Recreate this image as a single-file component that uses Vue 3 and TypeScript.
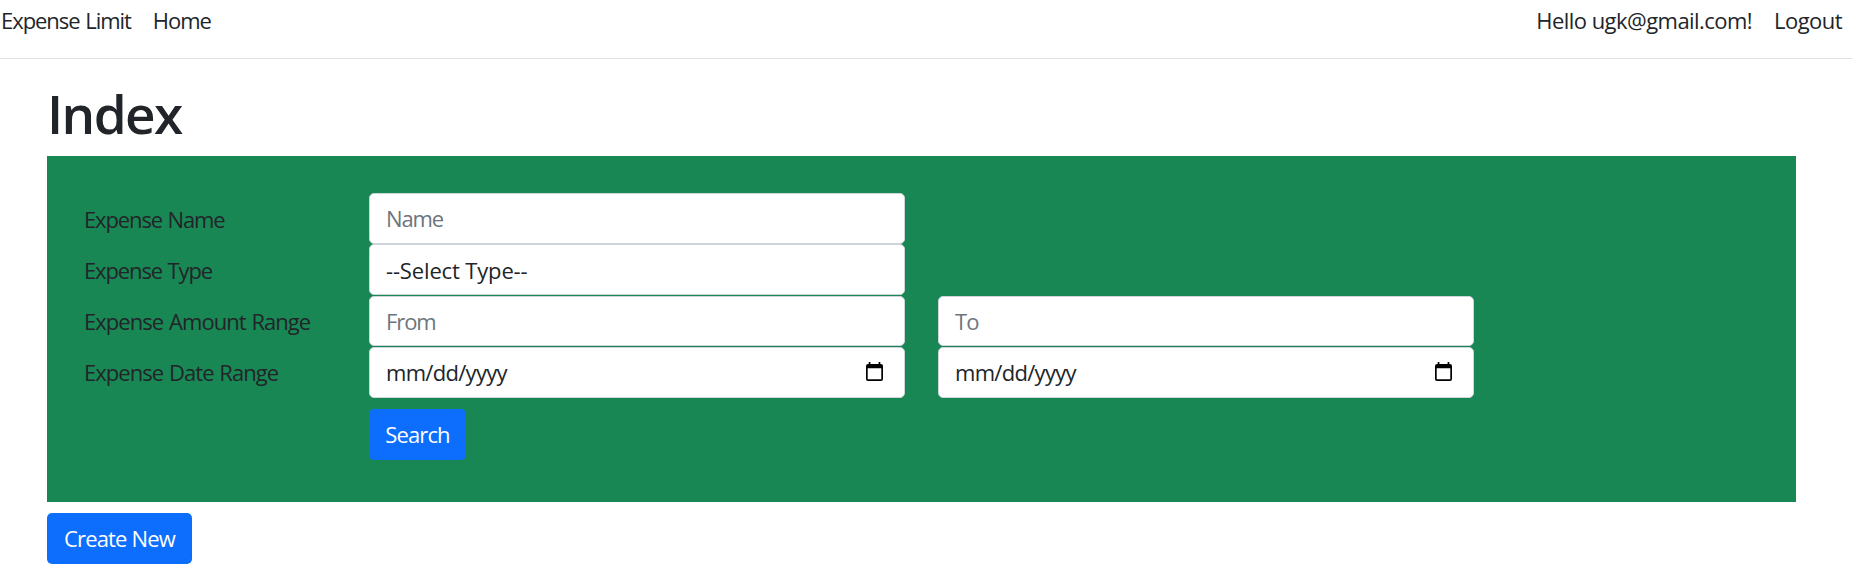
<script setup lang="ts">
import { ref } from 'vue'

interface Field {
  key: string
  placeholder: string
  kind: 'text' | 'select' | 'date'
}

interface Row {
  key: string
  label: string
  fields: Field[]
}

const rows: Row[] = [
  { key: 'name', label: 'Expense Name', fields: [{ key: 'f-name', placeholder: 'Name', kind: 'text' }] },
  { key: 'type', label: 'Expense Type', fields: [{ key: 'f-type', placeholder: '--Select Type--', kind: 'select' }] },
  {
    key: 'amount',
    label: 'Expense Amount Range',
    fields: [
      { key: 'f-from', placeholder: 'From', kind: 'text' },
      { key: 'f-to', placeholder: 'To', kind: 'text' },
    ],
  },
  {
    key: 'date',
    label: 'Expense Date Range',
    fields: [
      { key: 'f-start', placeholder: 'mm/dd/yyyy', kind: 'date' },
      { key: 'f-end', placeholder: 'mm/dd/yyyy', kind: 'date' },
    ],
  },
]

const values = ref<Record<string, string>>({})
</script>

<template>
  <div class="page">
    <header class="navbar">
      <nav class="links">
        <a class="brand">Expense Limit</a>
        <a class="home">Home</a>
      </nav>
      <nav class="links account">
        <a class="hello">Hello ugk@gmail.com!</a>
        <a class="logout">Logout</a>
      </nav>
    </header>

    <main class="content">
      <h1>Index</h1>
      <form class="panel" @submit.prevent>
        <div v-for="row in rows" :key="row.key" class="row" :class="'row-' + row.key">
          <label><span>{{ row.label }}</span></label>
          <div v-for="f in row.fields" :key="f.key" class="cell" :class="f.key">
            <select v-if="f.kind === 'select'" class="control select">
              <option>{{ f.placeholder }}</option>
            </select>
            <input v-else v-model="values[f.key]" class="control" :class="f.kind" type="text" :placeholder="f.placeholder" />
            <svg v-if="f.kind === 'date'" class="calendar" viewBox="0 0 17 19">
              <path d="M2 2H15Q17 2 17 4V17Q17 19 15 19H2Q0 19 0 17V4Q0 2 2 2ZM1.7 6.2V17.3H15.3V6.2Z" fill-rule="evenodd" />
              <path d="M2.7 0H4.4V3H2.7ZM12.6 0H14.3V3H12.6Z" />
            </svg>
          </div>
        </div>
        <button class="btn search" type="submit"><span>Search</span></button>
      </form>
      <a class="btn create"><span>Create New</span></a>
    </main>
  </div>
</template>

<style>
body {
  margin: 0;
  background: #fff;
}
</style>

<style scoped>
.page {
  height: 567px;
  overflow: hidden;
  font-family: "Open Sans", "Noto Sans", sans-serif;
  font-size: 22px;
  line-height: 34px;
  letter-spacing: -0.85px;
  color: #212529;
}
.page * {
  box-sizing: border-box;
}
.navbar {
  display: flex;
  justify-content: space-between;
  height: 59px;
  padding: 3px 10px 0 1px;
  border-bottom: 1px solid #dee2e6;
}
.links {
  display: flex;
  gap: 22px;
  white-space: nowrap;
}
.brand {
  letter-spacing: -1.05px;
  word-spacing: 1px;
}
.home {
  letter-spacing: -1px;
}
.account {
  gap: 22px;
  letter-spacing: -0.55px;
}
.content {
  padding: 0 56px 0 47px;
}
h1 {
  margin: 0;
  padding-top: 21px;
  height: 97px;
  font-size: 53px;
  line-height: 68px;
  font-weight: 600;
  letter-spacing: -1.6px;
}
.panel {
  height: 346px;
  padding: 37px;
  background: #198754;
}
.row {
  display: flex;
  height: 51px;
}
.row-type {
  height: 52px;
}
label {
  width: 285px;
  padding-top: 8px;
  white-space: nowrap;
  letter-spacing: -0.95px;
  word-spacing: 1px;
}
.row-name label,
.row-type label {
  padding-top: 9px;
  letter-spacing: -1.13px;
}
.cell {
  position: relative;
  width: 536px;
  margin-right: 33px;
}
.control {
  display: block;
  width: 100%;
  height: 51px;
  margin: 0;
  padding: 0 16px 2px;
  border: 1px solid #ced4da;
  border-radius: 5px;
  outline: none;
  appearance: none;
  background: #fff;
  color: #212529;
  font: inherit;
  letter-spacing: inherit;
}
.row-amount .control {
  height: 50px;
  padding-bottom: 0;
}
.control.select {
  padding-bottom: 0;
  letter-spacing: -0.15px;
}
.control.date {
  letter-spacing: -0.7px;
}
.row-name .control,
.f-from .control {
  letter-spacing: -1.1px;
}
.control::placeholder {
  color: #6c757d;
  opacity: 1;
}
.control.date::placeholder {
  color: #212529;
}
.calendar {
  position: absolute;
  right: 22px;
  top: 14.5px;
  width: 17px;
  height: 19px;
}
.btn {
  display: flex;
  align-items: center;
  justify-content: center;
  height: 51px;
  padding: 0 0 2px;
  border: 0;
  border-radius: 5px;
  background: #0d6efd;
  color: #fff;
  font: inherit;
  letter-spacing: inherit;
  white-space: nowrap;
}
.search {
  width: 97px;
  margin: 11px 0 0 285px;
}
.create {
  width: 145px;
  margin-top: 11px;
}
</style>
